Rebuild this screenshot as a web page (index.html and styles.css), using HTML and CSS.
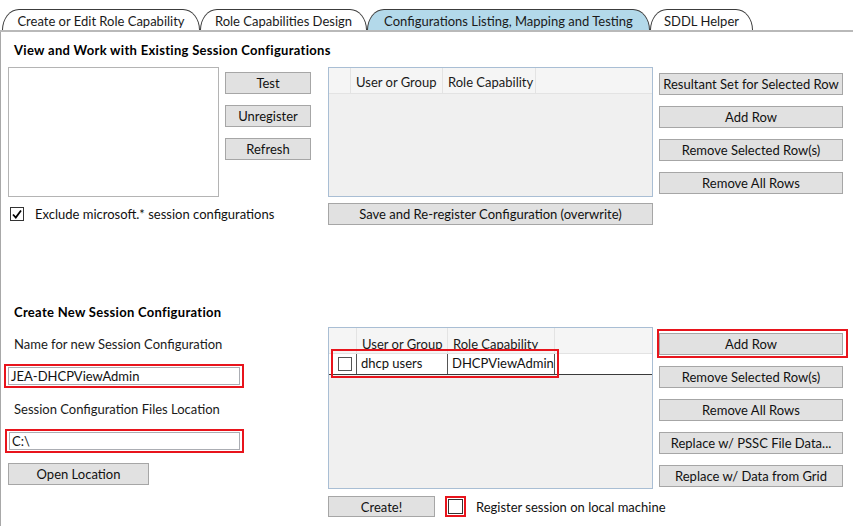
FILE: index.html
```html
<!DOCTYPE html>
<html>
<head>
<meta charset="utf-8">
<link rel="stylesheet" href="styles.css">
</head>
<body>
<div class="tabs">
  <div class="tab t1">Create or Edit Role Capability</div>
  <div class="tab t2">Role Capabilities Design</div>
  <div class="tab t3 active">Configurations Listing, Mapping and Testing</div>
  <div class="tab t4">SDDL Helper</div>
</div>
<div class="panel">
  <section class="sec1">
    <h2 class="heading">View and Work with Existing Session Configurations</h2>
    <div class="row1">
      <div class="listbox"></div>
      <div class="btncol btncol-a">
        <button class="btn">Test</button>
        <button class="btn">Unregister</button>
        <button class="btn">Refresh</button>
      </div>
      <div class="grid grid1">
        <div class="grid-head">
          <div class="hc rh"></div>
          <div class="hc c1">User or Group</div>
          <div class="hc c2">Role Capability</div>
        </div>
      </div>
      <div class="btncol btncol-b">
        <button class="btn">Resultant Set for Selected Row</button>
        <button class="btn">Add Row</button>
        <button class="btn">Remove Selected Row(s)</button>
        <button class="btn">Remove All Rows</button>
      </div>
    </div>
    <div class="row1b">
      <div class="check">
        <span class="cb checked"><svg width="12" height="12" viewBox="0 0 12 12"><polyline points="2,6.5 4.8,9.5 10,2.5" fill="none" stroke="#000" stroke-width="1.8"/></svg></span>
        <span class="cblabel">Exclude microsoft.* session configurations</span>
      </div>
      <button class="btn save">Save and Re-register Configuration (overwrite)</button>
    </div>
  </section>

  <section class="sec2">
    <div class="s2-left">
      <h2 class="heading h2b">Create New Session Configuration</h2>
      <div class="label l1">Name for new Session Configuration</div>
      <div class="redbox tbwrap"><div class="textbox">JEA-DHCPViewAdmin</div></div>
      <div class="label l2">Session Configuration Files Location</div>
      <div class="redbox tbwrap tb2"><div class="textbox">C:\</div></div>
      <button class="btn openloc">Open Location</button>
    </div>
    <div class="s2-mid">
      <div class="grid grid2">
        <div class="grid-head">
          <div class="hc rh"></div>
          <div class="hc c1">User or Group</div>
          <div class="hc c2">Role Capability</div>
        </div>
        <div class="grid-row">
          <div class="rc rh"><span class="cb small"></span></div>
          <div class="rc c1">dhcp users</div>
          <div class="rc c2">DHCPViewAdmin</div>
        </div>
        <div class="rowmark"></div>
      </div>
      <div class="s2-bottom">
        <button class="btn create">Create!</button>
        <div class="redbox cbwrap"><span class="cb"></span></div>
        <span class="cblabel reg">Register session on local machine</span>
      </div>
    </div>
    <div class="s2-right">
      <div class="redbox addwrap"><button class="btn">Add Row</button></div>
      <button class="btn">Remove Selected Row(s)</button>
      <button class="btn">Remove All Rows</button>
      <button class="btn">Replace w/ PSSC File Data...</button>
      <button class="btn">Replace w/ Data from Grid</button>
    </div>
  </section>
</div>
</body>
</html>
```

FILE: styles.css
```css
* { box-sizing: border-box; }
html, body { margin: 0; padding: 0; }
body {
  width: 853px;
  height: 526px;
  overflow: hidden;
  background: #fff;
  font-family: Lato, "Liberation Sans", sans-serif;
  font-size: 13px;
  color: #111;
}

/* tabs */
.tabs {
  display: flex;
  align-items: flex-end;
  height: 32px;
  padding: 9px 0 0 2px;
  border-bottom: 2px solid #b9b9b9;
}
.tab {
  height: 21px;
  border: 1px solid #3c3c3c;
  border-bottom: none;
  border-radius: 17px 17px 0 0 / 21px 21px 0 0;
  background: #fff;
  display: flex;
  align-items: center;
  justify-content: center;
  line-height: 16px;
  padding-top: 1px;
  color: #1a1a1a;
  white-space: nowrap;
  flex: none;
}
.t1 { width: 198px; }
.t2 { width: 167px; }
.t3 { width: 283px; }
.t4 { width: 103px; }
.tab.active { background: #b3d9ea; }

/* panel */
.panel {
  border-left: 1px solid #a8a8a8;
  height: 494px;
}
.heading {
  margin: 0;
  font-size: 13px;
  font-weight: 700;
  line-height: 16px;
  letter-spacing: 0.3px;
  color: #000;
  white-space: nowrap;
}

.sec1 { padding: 10px 0 0 7px; }
.sec1 .heading { margin: 0 0 9px 6px; }
.row1 { display: flex; align-items: flex-start; }
.listbox {
  width: 211px;
  height: 130px;
  border: 1px solid #b4b4b4;
  background: #fff;
  flex: none;
}
.btncol { display: flex; flex-direction: column; gap: 11px; flex: none; }
.btncol-a { width: 86px; margin-left: 6px; padding-top: 5px; }
.btncol-b { width: 184px; margin-left: 6px; padding-top: 6px; }

.btn {
  display: block;
  width: 100%;
  height: 22px;
  padding: 0;
  margin: 0;
  border: 1px solid #a6a6a6;
  background: #e1e1e1;
  font-family: inherit;
  font-size: 13px;
  color: #111;
  text-align: center;
  line-height: 18px;
  white-space: nowrap;
  flex: none;
}

/* grids */
.grid {
  position: relative;
  width: 325px;
  border: 1px solid #a9bed4;
  background: #f0f0f0;
  margin-left: 17px;
  flex: none;
}
.grid1 { height: 130px; }
.grid-head {
  display: flex;
  height: 26px;
  border-bottom: 1px solid #e3e3e3;
  background: #f5f5f5;
}
.hc {
  height: 100%;
  border-right: 1px solid #e3e3e3;
  padding: 6px 0 0 5px;
  line-height: 16px;
  color: #1a1a1a;
  white-space: nowrap;
  flex: none;
}
.grid1 .rh { width: 22px; }
.grid1 .c1 { width: 92px; }
.grid1 .c2 { width: 93px; }

.grid2 { height: 162px; margin-left: 0; }
.grid2 .rh { width: 28px; }
.grid2 .c1 { width: 91px; }
.grid2 .c2 { width: 107px; }
.grid2 .hc { padding-top: 8px; }
.grid-row {
  display: flex;
  height: 21px;
  background: #fff;
  border-bottom: 1px solid #3a3a3a;
}
.rc {
  height: 100%;
  border-right: 1px solid #555;
  padding-left: 4px;
  line-height: 19px;
  color: #111;
  white-space: nowrap;
  flex: none;
}
.grid-row .rh { padding: 3px 0 0 9px; }
.rowmark {
  position: absolute;
  left: 2px;
  top: 21px;
  width: 228px;
  height: 29px;
  border: 2px solid #e8141c;
}

/* checkboxes */
.cb {
  display: inline-flex;
  align-items: center;
  justify-content: center;
  width: 14px;
  height: 14px;
  border: 1px solid #333;
  background: #fff;
  flex: none;
}
.cb.small { width: 14px; height: 14px; border-color: #555; }

.row1b {
  display: flex;
  align-items: flex-start;
  margin-top: 6px;
  height: 22px;
}
.check {
  display: flex;
  align-items: center;
  width: 320px;
  padding: 3px 0 0 2px;
  flex: none;
}
.cblabel { margin-left: 11px; line-height: 16px; color: #111; white-space: nowrap; flex: none; }
.save { width: 325px; }

/* section 2 */
.sec2 {
  display: flex;
  align-items: flex-start;
  margin-top: 79px;
  padding-left: 3px;
}
.s2-left { width: 240px; display: flex; flex-direction: column; flex: none; }
.h2b { margin-left: 10px; }
.label { margin-left: 10px; line-height: 16px; color: #1a1a1a; white-space: nowrap; }
.l1 { margin-top: 16px; }
.l2 { margin-top: 13px; }
.redbox { border: 2px solid #e8141c; }
.tbwrap { margin-top: 12px; padding: 1px 2px 1px 2px; height: 24px; }
.textbox {
  height: 18px;
  border: 1px solid #abadb3;
  background: #fff;
  padding-left: 2px;
  line-height: 16px;
  color: #111;
}
.tb2 { margin-left: 1px; width: 239px; }
.openloc { width: 141px; margin: 10px 0 0 4px; }

.s2-mid { margin-left: 84px; padding-top: 23px; width: 325px; flex: none; }
.s2-bottom { display: flex; align-items: center; margin-top: 7px; height: 21px; }
.create { width: 107px; height: 21px; }
.cbwrap { margin-left: 10px; width: 21px; height: 21px; padding: 1px; display: flex; align-items: center; justify-content: center; flex: none; }
.cbwrap .cb { width: 15px; height: 15px; border-color: #333; }
.reg { margin-left: 10px; }

.s2-right {
  width: 184px;
  margin-left: 6px;
  padding-top: 25px;
  display: flex;
  flex-direction: column;
  gap: 11px;
  flex: none;
}
.addwrap {
  margin-left: -2px;
  width: 191px;
  padding: 2px 3px 1px 0;
  margin-bottom: -3px;
}
.addwrap .btn { width: 184px; }
```
